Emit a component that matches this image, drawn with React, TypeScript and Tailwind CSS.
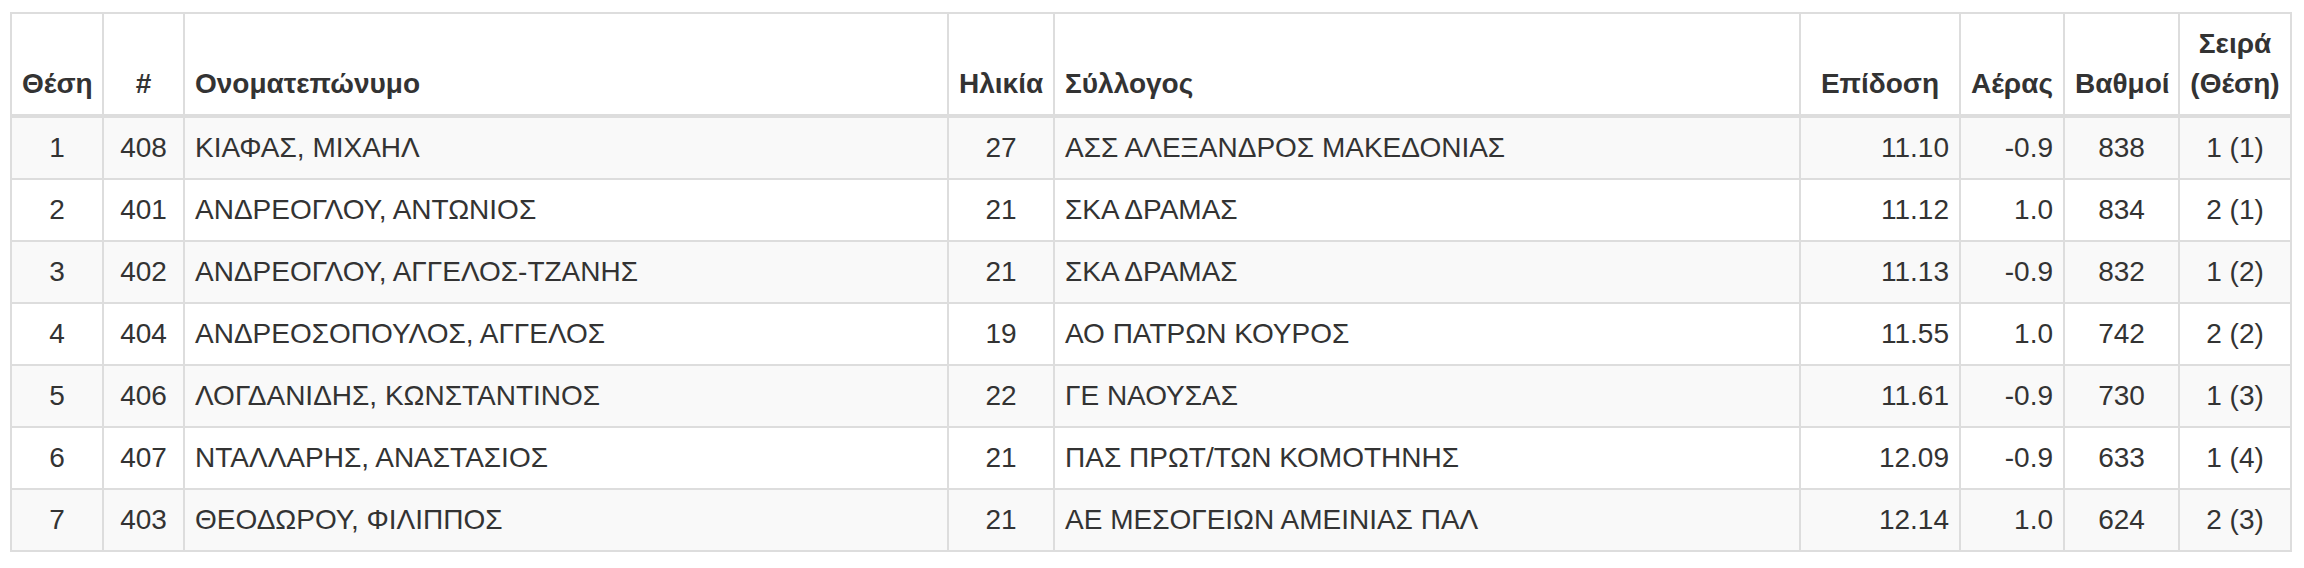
type Row = {
  pos: number
  bib: number
  name: string
  age: number
  club: string
  mark: string
  wind: string
  points: number
  heat: string
}

const rows: Row[] = [
  { pos: 1, bib: 408, name: 'ΚΙΑΦΑΣ, ΜΙΧΑΗΛ', age: 27, club: 'ΑΣΣ ΑΛΕΞΑΝΔΡΟΣ ΜΑΚΕΔΟΝΙΑΣ', mark: '11.10', wind: '-0.9', points: 838, heat: '1 (1)' },
  { pos: 2, bib: 401, name: 'ΑΝΔΡΕΟΓΛΟΥ, ΑΝΤΩΝΙΟΣ', age: 21, club: 'ΣΚΑ ΔΡΑΜΑΣ', mark: '11.12', wind: '1.0', points: 834, heat: '2 (1)' },
  { pos: 3, bib: 402, name: 'ΑΝΔΡΕΟΓΛΟΥ, ΑΓΓΕΛΟΣ-ΤΖΑΝΗΣ', age: 21, club: 'ΣΚΑ ΔΡΑΜΑΣ', mark: '11.13', wind: '-0.9', points: 832, heat: '1 (2)' },
  { pos: 4, bib: 404, name: 'ΑΝΔΡΕΟΣΟΠΟΥΛΟΣ, ΑΓΓΕΛΟΣ', age: 19, club: 'ΑΟ ΠΑΤΡΩΝ ΚΟΥΡΟΣ', mark: '11.55', wind: '1.0', points: 742, heat: '2 (2)' },
  { pos: 5, bib: 406, name: 'ΛΟΓΔΑΝΙΔΗΣ, ΚΩΝΣΤΑΝΤΙΝΟΣ', age: 22, club: 'ΓΕ ΝΑΟΥΣΑΣ', mark: '11.61', wind: '-0.9', points: 730, heat: '1 (3)' },
  { pos: 6, bib: 407, name: 'ΝΤΑΛΛΑΡΗΣ, ΑΝΑΣΤΑΣΙΟΣ', age: 21, club: 'ΠΑΣ ΠΡΩΤ/ΤΩΝ ΚΟΜΟΤΗΝΗΣ', mark: '12.09', wind: '-0.9', points: 633, heat: '1 (4)' },
  { pos: 7, bib: 403, name: 'ΘΕΟΔΩΡΟΥ, ΦΙΛΙΠΠΟΣ', age: 21, club: 'ΑΕ ΜΕΣΟΓΕΙΩΝ ΑΜΕΙΝΙΑΣ ΠΑΛ', mark: '12.14', wind: '1.0', points: 624, heat: '2 (3)' },
]

const th = 'border-2 border-b-4 border-[#ddd] px-[10px] py-[10px] align-bottom font-bold'
const td = 'border-2 border-[#ddd] px-[10px] py-[10px] align-middle'

export default function App() {
  return (
    <div className="min-h-[568px] bg-white pt-[12px] pl-[10px] font-['Liberation_Sans',Arial,sans-serif] text-[28px] leading-[40px] text-[#333]">
      <table className="w-[2280px] table-fixed border-collapse border-2 border-[#ddd]">
        <colgroup>
          <col className="w-[92px]" />
          <col className="w-[81px]" />
          <col className="w-[764px]" />
          <col className="w-[106px]" />
          <col className="w-[746px]" />
          <col className="w-[160px]" />
          <col className="w-[104px]" />
          <col className="w-[115px]" />
          <col className="w-[112px]" />
        </colgroup>
        <thead>
          <tr>
            <th className={`${th} text-center`}>Θέση</th>
            <th className={`${th} text-center`}>#</th>
            <th className={`${th} text-left`}>Ονοματεπώνυμο</th>
            <th className={`${th} text-center`}>Ηλικία</th>
            <th className={`${th} text-left`}>Σύλλογος</th>
            <th className={`${th} text-center`}>Επίδοση</th>
            <th className={`${th} text-center`}>Αέρας</th>
            <th className={`${th} text-center`}>Βαθμοί</th>
            <th className={`${th} text-center`}>
              Σειρά
              <br />
              (Θέση)
            </th>
          </tr>
        </thead>
        <tbody>
          {rows.map((r, i) => (
            <tr key={r.bib} className={i % 2 === 0 ? 'bg-[#f9f9f9]' : 'bg-white'}>
              <td className={`${td} text-center`}>{r.pos}</td>
              <td className={`${td} text-center`}>{r.bib}</td>
              <td className={`${td} text-left`}>{r.name}</td>
              <td className={`${td} text-center`}>{r.age}</td>
              <td className={`${td} text-left`}>{r.club}</td>
              <td className={`${td} text-right`}>{r.mark}</td>
              <td className={`${td} text-right`}>{r.wind}</td>
              <td className={`${td} text-center`}>{r.points}</td>
              <td className={`${td} text-center`}>{r.heat}</td>
            </tr>
          ))}
        </tbody>
      </table>
    </div>
  )
}
